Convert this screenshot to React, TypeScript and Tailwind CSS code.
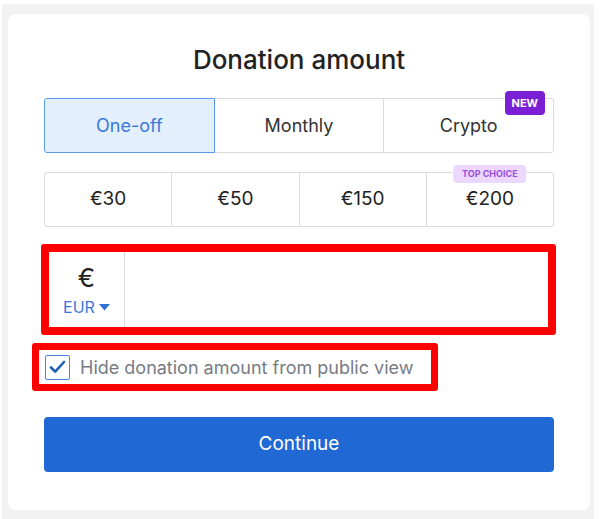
import { useState } from "react";

const TABS = ["One-off", "Monthly", "Crypto"];
const AMOUNTS = [30, 50, 150, 200];

export default function App() {
  const [tab, setTab] = useState("One-off");
  const [hidden, setHidden] = useState(true);

  return (
    <div className="min-h-screen bg-white pl-[2px] pr-[7px] pt-[4px] font-['Inter',_'Noto_Sans',_sans-serif]">
      <div className="bg-[#f2f2f2] pl-[6px] pr-[4px] pt-[10px] pb-[10px]">
        <div className="flex h-[496px] flex-col rounded-lg bg-white px-[36px] pt-[30px]">
          <h1 className="text-center text-[26px] leading-[32px] font-medium text-[#222]">
            Donation amount
          </h1>

          {/* Frequency tabs */}
          <div className="mt-[22px] flex h-[55px]">
            {TABS.map((t, i) => {
              const active = t === tab;
              return (
                <button
                  key={t}
                  onClick={() => setTab(t)}
                  className={
                    "relative flex flex-1 items-center justify-center border text-[18px] " +
                    (i > 0 ? "-ml-px " : "") +
                    (i === 0 ? "rounded-l-[3px] " : "") +
                    (i === TABS.length - 1 ? "rounded-r-[3px] " : "") +
                    (active
                      ? "z-10 border-[#5b9be9] bg-[#e4effd] text-[#3b79d9]"
                      : "border-[#dadada] bg-white text-[#333]")
                  }
                >
                  {t}
                  {t === "Crypto" && (
                    <span className="absolute -top-[8px] right-[8px] rounded-[4px] bg-[#7b1fd4] px-[7px] py-[5px] text-[11px] leading-[14px] font-bold text-white">
                      NEW
                    </span>
                  )}
                </button>
              );
            })}
          </div>

          {/* Preset amounts */}
          <div className="mt-[19px] flex h-[55px] rounded-[3px] border border-[#dadada]">
            {AMOUNTS.map((a, i) => (
              <button
                key={a}
                className={
                  "relative flex flex-1 items-center justify-center text-[19px] text-[#222] " +
                  (i > 0 ? "border-l border-[#dadada]" : "")
                }
              >
                €{a}
                {a === 200 && (
                  <span className="absolute -top-[8px] left-1/2 -translate-x-1/2 rounded-[4px] bg-[#ecd7fe] px-[9px] py-[3px] text-[9px] leading-[12px] font-bold whitespace-nowrap text-[#9a4ed9]">
                    TOP CHOICE
                  </span>
                )}
              </button>
            ))}
          </div>

          {/* Custom amount */}
          <div className="mt-[17px] -ml-[3px] -mr-[2px] rounded-[3px] border-[8px] border-[#ff0000]">
            <div className="flex h-[75px] bg-white">
              <div className="flex w-[76px] flex-col items-center justify-center border-r border-[#dadada]">
                <span className="text-[26px] leading-[30px] text-[#222]">€</span>
                <span className="mt-[5px] flex items-center gap-[4px] text-[16px] leading-[18px] text-[#3b79d9]">
                  EUR
                  <svg width="11" height="7" viewBox="0 0 11 7">
                    <path d="M0 0h11L5.5 6.5z" fill="#2f6fd6" />
                  </svg>
                </span>
              </div>
              <input className="flex-1 px-4 text-[20px] outline-none" />
            </div>
          </div>

          {/* Hide amount */}
          <label className="mt-[8px] -ml-[12px] flex h-[48px] w-[406px] cursor-pointer items-center rounded-[3px] border-[7px] border-[#ff0000] pl-[6px]">
            <input
              type="checkbox"
              checked={hidden}
              onChange={(e) => setHidden(e.target.checked)}
              className="sr-only"
            />
            <span className="flex h-[25px] w-[25px] items-center justify-center rounded-[2px] border-[1.5px] border-[#4a88da] bg-white">
              {hidden && (
                <svg width="17" height="14" viewBox="0 0 17 14">
                  <path
                    d="M2 7.5l4.2 4.2L15 2"
                    fill="none"
                    stroke="#1f5fb8"
                    strokeWidth="2.6"
                    strokeLinecap="round"
                    strokeLinejoin="round"
                  />
                </svg>
              )}
            </span>
            <span className="ml-[10px] text-[18px] text-[#777c84]">
              Hide donation amount from public view
            </span>
          </label>

          <button className="mt-[26px] h-[55px] rounded-[4px] bg-[#2069d4] text-[19px] text-white">
            Continue
          </button>
        </div>
      </div>
    </div>
  );
}
